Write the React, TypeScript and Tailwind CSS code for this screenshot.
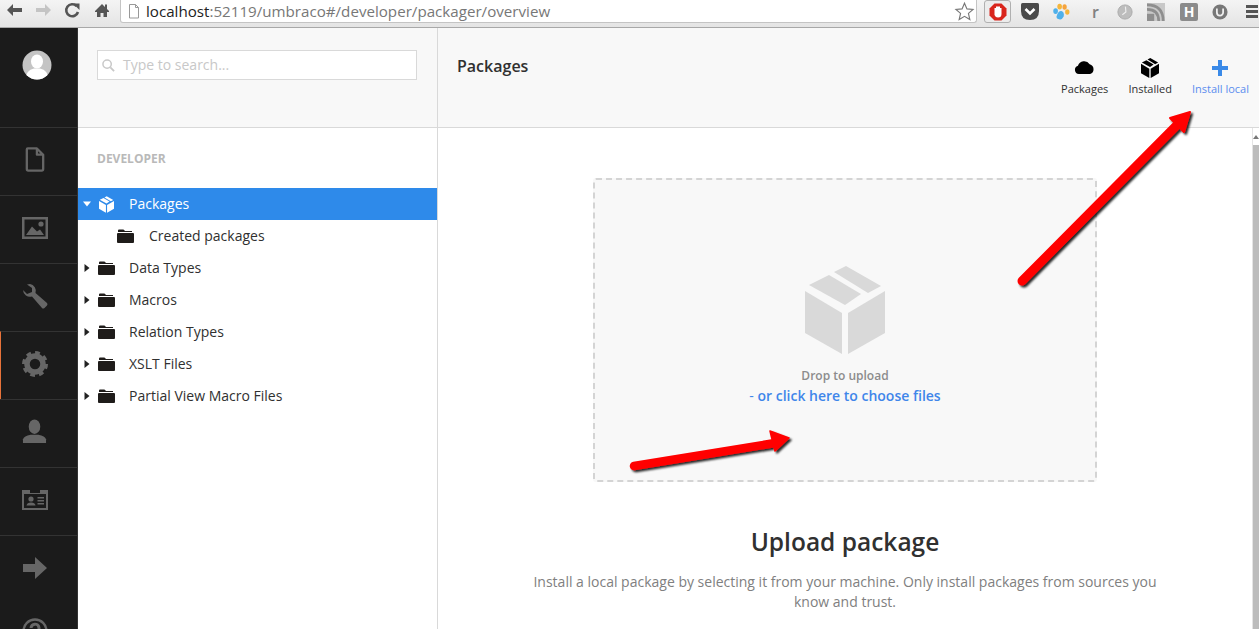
const font = "font-['Open_Sans',sans-serif]";

function BoxIcon({ className }: { className?: string }) {
    return (
        <svg viewBox="0 0 80 88" className={className} fill="currentColor">
            <path d="M0 25 L37 47 V88 L0 67 Z" />
            <path d="M80 25 L43 47 V88 L80 67 Z" />
            <path d="M4 19 L24 9 L56 28 L40 39 Z" />
            <path d="M29 6 L41 0 L76 20 L63 27 Z" />
        </svg>
    );
}

function FolderIcon() {
    return (
        <svg viewBox="0 0 17 14" className="h-[14px] w-[17px] shrink-0" fill="#1f1c1a">
            <path d="M1 3 V1.5 Q1 .5 2 .5 H6 Q7 .5 7.5 1.5 L8 2 H15 V3 Z" />
            <rect x="0" y="4" width="17" height="10" rx="1" />
        </svg>
    );
}

function Caret({ open, white }: { open?: boolean; white?: boolean }) {
    const fill = white ? "#fff" : "#222";
    return (
        <svg viewBox="0 0 8 8" className="h-2 w-2 shrink-0" fill={fill}>
            {open ? <path d="M0 1.5 H8 L4 6.5 Z" /> : <path d="M1.5 0 L6.5 4 L1.5 8 Z" />}
        </svg>
    );
}

function TreeRow({ label, icon, open, active, child }: { label: string; icon?: React.ReactNode; open?: boolean; active?: boolean; child?: boolean }) {
    return (
        <div className={`flex h-8 items-center text-sm ${active ? "bg-[#2e8aea] text-white" : "text-[#303030]"} ${child ? "pl-[39px]" : "pl-[5px]"}`}>
            {!child && <Caret open={open} white={active} />}
            <div className={`${child ? "" : "ml-[7px]"} flex w-[17px] justify-center`}>{icon ?? <FolderIcon />}</div>
            <span className={child ? "ml-[15px]" : "ml-[14px]"}>{label}</span>
        </div>
    );
}

function NavItem({ children, active }: { children: React.ReactNode; active?: boolean }) {
    return (
        <div className={`flex h-[68px] shrink-0 items-center justify-center border-t border-[#333] pb-[4px] pr-[8px] text-[#666] ${active ? "border-l border-l-[#e8733a]" : ""}`}>
            {children}
        </div>
    );
}

function TopAction({ label, children, blue }: { label: string; children: React.ReactNode; blue?: boolean }) {
    return (
        <div className={`flex flex-col items-center text-[11px] leading-[14px] ${blue ? "text-[#5b8def]" : "text-[#303030]"}`}>
            <div className="flex h-[22px] items-center justify-center">{children}</div>
            <span className="mt-[3px]">{label}</span>
        </div>
    );
}

function BrowserBar() {
    return (
        <div className="flex h-[28px] shrink-0 items-start border-b border-[#a8a8a8] bg-gradient-to-b from-[#f4f4f4] to-[#e4e4e4]">
            <svg viewBox="0 0 120 27" className="h-[27px] w-[120px] shrink-0">
                <path d="M7 10 L13 4 V8 H22 V12 H13 V16 Z" fill="#555" />
                <path d="M51 10 L45 4 V8 H36 V12 H45 V16 Z" fill="#c4c4c4" />
                <path d="M76.5 6 A6 6 0 1 0 78 12" fill="none" stroke="#555" strokeWidth="2.6" />
                <path d="M73 3.5 L79.5 3.5 L79.5 10 Z" fill="#555" />
                <path d="M95 11 L102 4 L105 7 V4.5 H107 V9 L109 11 V12 H107 V17 H103.5 V13 H100.5 V17 H97 V12 H95 Z" fill="#555" />
            </svg>
            <div className="flex h-[23px] w-[857px] shrink-0 items-center rounded-bl-[3px] rounded-br-[3px] border-b border-l border-r border-[#c4c4c4] bg-white pl-[7px]">
                <svg viewBox="0 0 12 15" className="h-[15px] w-3 shrink-0" fill="none" stroke="#999">
                    <path d="M1.5 .5 H7.5 L10.5 3.5 V14 H1.5 Z M7.5 .5 V3.5 H10.5" />
                </svg>
                <div className="ml-[6px] text-[15.15px] leading-[20px] text-[#777]">
                    <span className="text-[#222]">localhost</span>:52119/umbraco#/developer/packager/overview
                </div>
                <svg viewBox="0 0 24 24" className="ml-auto mr-[1px] h-[21px] w-[21px]" fill="#fff" stroke="#777" strokeWidth="1.3">
                    <path d="M12 2.5 L14.8 9 L21.8 9.6 L16.5 14.2 L18.1 21.2 L12 17.5 L5.9 21.2 L7.5 14.2 L2.2 9.6 L9.2 9 Z" />
                </svg>
            </div>
            <div className="flex h-[23px] flex-1 items-center pl-[7px]">
                <div className="flex h-[23px] w-[27px] shrink-0 items-center justify-center rounded-[3px] border border-[#b0b0b0] bg-[#ececec]">
                    <svg viewBox="0 0 18 18" className="h-[18px] w-[18px]">
                        <path d="M5.5 .5 H12.5 L17.5 5.5 V12.5 L12.5 17.5 H5.5 L.5 12.5 V5.5 Z" fill="#d9251c" />
                        <path d="M5.5 9 V5 H7 V3.5 H11 V5 H12.5 V11 Q12.5 14.5 9 14.5 Q6.5 14.5 5.5 12 Z" fill="#fff" />
                    </svg>
                </div>
                <svg viewBox="0 0 20 18" className="ml-[9px] h-[18px] w-5 shrink-0">
                    <path d="M1 1.5 Q1 0 2.5 0 H17.5 Q19 0 19 1.5 V8 Q19 17 10 17 Q1 17 1 8 Z" fill="#4a4a4a" />
                    <path d="M5.5 6 L10 10.5 L14.5 6" fill="none" stroke="#fff" strokeWidth="2.6" />
                </svg>
                <svg viewBox="0 0 20 20" className="ml-[12px] h-[18px] w-[18px] shrink-0">
                    <ellipse cx="4" cy="9" rx="2.6" ry="3.3" fill="#4fb0ea" />
                    <ellipse cx="8.5" cy="4" rx="2.6" ry="3.3" fill="#f5b63c" />
                    <ellipse cx="14" cy="4.5" rx="2.4" ry="3" fill="#f5a33c" />
                    <ellipse cx="17" cy="10" rx="2.4" ry="3" fill="#f5b63c" />
                    <path d="M5 15 Q7 8.5 10.5 9 Q14 10 13 15 Q11 19 8 18 Q5 18 5 15 Z" fill="#4fb0ea" />
                </svg>
                <span className="ml-[22px] w-[6px] text-[16px] font-semibold leading-[20px] text-[#808080]">r</span>
                <svg viewBox="0 0 18 18" className="ml-[19px] h-4 w-4 shrink-0">
                    <circle cx="9" cy="9" r="8" fill="#bdbdbd" stroke="#a8a8a8" />
                    <path d="M9.5 3 L10 9 L6 12" fill="none" stroke="#eee" strokeWidth="1.3" />
                </svg>
                <svg viewBox="0 0 20 20" className="ml-[14px] h-[18px] w-[18px] shrink-0">
                    <rect width="20" height="20" fill="#c8c8c8" />
                    <rect x="0" y="12" width="8" height="8" fill="#8e8e8e" />
                    <path d="M0 7 Q13 7 13 20 M0 2 Q18 2 18 20" fill="none" stroke="#8e8e8e" strokeWidth="3" />
                </svg>
                <div className="ml-[15px] flex h-[18px] w-[18px] shrink-0 items-center justify-center rounded-[2px] bg-[#8b8b8b] text-[14px] leading-none font-bold text-white">H</div>
                <svg viewBox="0 0 18 18" className="ml-[14px] h-4 w-4 shrink-0">
                    <circle cx="9" cy="9" r="8.5" fill="#777" />
                    <path d="M5.5 5 V9.5 A3.5 3.5 0 0 0 12.5 9.5 V5" fill="none" stroke="#eee" strokeWidth="2" />
                </svg>
                <div className="ml-[18px] flex flex-col gap-[2px]">
                    <div className="h-[3px] w-[12px] bg-[#555]" />
                    <div className="h-[3px] w-[12px] bg-[#555]" />
                    <div className="h-[3px] w-[12px] bg-[#555]" />
                </div>
            </div>
        </div>
    );
}

function Sidebar() {
    return (
        <div className="flex w-[78px] shrink-0 flex-col overflow-hidden border-r border-[#333] bg-[#1b1b1b]">
            <div className="flex h-[99px] shrink-0 justify-center pr-[4px] pt-[22px]">
                <svg viewBox="0 0 30 30" className="h-[30px] w-[30px]">
                    <clipPath id="avatar"><circle cx="15" cy="15" r="14.5" /></clipPath>
                    <circle cx="15" cy="15" r="14.5" fill="#c4c4c4" />
                    <g clipPath="url(#avatar)" fill="#fff">
                        <ellipse cx="15" cy="11.5" rx="6" ry="7" />
                        <path d="M3 30 Q4 20 12 18.5 H18 Q26 20 27 30 Z" />
                    </g>
                </svg>
            </div>
            <NavItem>
                <svg viewBox="0 0 20 26" className="h-[25px] w-5" fill="none" stroke="currentColor" strokeWidth="2.4">
                    <path d="M2.5 1.5 H12 L18.5 8 V23 Q18.5 24.5 17 24.5 H3 Q1.5 24.5 1.5 23 V2.5 Q1.5 1.5 2.5 1.5 Z M12 1.5 V8 H18.5" strokeLinejoin="round" />
                </svg>
            </NavItem>
            <NavItem>
                <svg viewBox="0 0 26 22" className="h-[22px] w-[26px]" fill="currentColor">
                    <path fillRule="evenodd" d="M0 0 H26 V22 H0 Z M2.5 2.5 V19.5 H23.5 V2.5 Z" />
                    <circle cx="19" cy="7" r="2.6" />
                    <path d="M4 18 L10 9.5 L15 14.5 L18 12.5 L22 18 Z" />
                </svg>
            </NavItem>
            <NavItem>
                <svg viewBox="0 0 26 26" className="h-[26px] w-[26px]" fill="currentColor">
                    <path d="M8 1 A7 7 0 0 1 13.5 10 L25 20 Q26 21 25 22.5 L22.5 25 Q21 26 20 25 L10 13.5 A7 7 0 0 1 1 7 L5 11 L10 9 L10 5 L5 1.5 Q6.5 1 8 1 Z" />
                </svg>
            </NavItem>
            <NavItem active>
                <svg viewBox="0 0 26 26" className="h-[26px] w-[26px]">
                    <circle cx="13" cy="13" r="8" fill="none" stroke="currentColor" strokeWidth="5.5" />
                    <circle cx="13" cy="13" r="11" fill="none" stroke="currentColor" strokeWidth="4" strokeDasharray="4.6 4" />
                </svg>
            </NavItem>
            <NavItem>
                <svg viewBox="0 0 26 26" className="h-[25px] w-[25px]" fill="currentColor">
                    <ellipse cx="13" cy="8" rx="6" ry="7.5" />
                    <path d="M1 25 V21 Q2 18 9 16.5 H17 Q24 18 25 21 V25 Z" />
                </svg>
            </NavItem>
            <NavItem>
                <svg viewBox="0 0 26 20" className="h-5 w-[26px]" fill="currentColor">
                    <path fillRule="evenodd" d="M0 0 H26 V20 H0 Z M2 4 V18 H24 V4 Z" />
                    <path d="M8 0 H18 V3 H8 Z" fill="#1b1b1b" />
                    <circle cx="9" cy="9" r="2.6" />
                    <path d="M4.5 15.5 Q5 12.5 9 12.5 Q13 12.5 13.5 15.5 Z" />
                    <path d="M15.5 7 H22 V8.5 H15.5 Z M15.5 10 H22 V11.5 H15.5 Z M15.5 13 H22 V14.5 H15.5 Z" />
                </svg>
            </NavItem>
            <NavItem>
                <svg viewBox="0 0 24 22" className="h-[22px] w-6" fill="currentColor">
                    <path d="M0 7 H12 V0 L24 11 L12 22 V15 H0 Z" />
                </svg>
            </NavItem>
            <div className="flex h-[68px] shrink-0 justify-center pr-[8px] pt-[15px] text-[#666]">
                <svg viewBox="0 0 26 26" className="h-[26px] w-[26px]" fill="none" stroke="currentColor" strokeWidth="2.4">
                    <circle cx="13" cy="13" r="11.5" />
                    <path d="M9 10 A4 4 0 1 1 14 14 V16" strokeWidth="3" />
                </svg>
            </div>
        </div>
    );
}

function Arrows() {
    return (
        <svg className="pointer-events-none absolute inset-0 h-full w-full" viewBox="0 0 1259 629">
            <defs>
                <filter id="shadow" x="-20%" y="-20%" width="140%" height="140%">
                    <feDropShadow dx="2" dy="2" stdDeviation="1" floodColor="#000" floodOpacity="0.85" />
                </filter>
            </defs>
            <g filter="url(#shadow)">
                <path d="M1022 281 L1178 124" stroke="#f00" strokeWidth="9" strokeLinecap="round" fill="none" />
                <path d="M1170 118 L1190 112 L1184 132 Z" fill="#f00" stroke="#f00" strokeWidth="2" strokeLinejoin="round" />
                <path d="M634 466 L775 443" stroke="#f00" strokeWidth="8.5" strokeLinecap="round" fill="none" />
                <path d="M770 431 L789 438 L775 451 Z" fill="#f00" stroke="#f00" strokeWidth="1.5" strokeLinejoin="round" />
            </g>
        </svg>
    );
}

export default function App() {
    return (
        <div className={`relative flex h-[629px] w-[1259px] flex-col overflow-hidden bg-white ${font}`}>
            <BrowserBar />
            <div className="flex min-h-0 flex-1">
                <Sidebar />
                <div className="flex w-[360px] shrink-0 flex-col border-r border-[#d9d9d9]">
                    <div className="h-[100px] shrink-0 border-b border-[#d9d9d9] bg-[#f8f8f8] pl-[19px] pt-[22px]">
                        <div className="flex h-[30px] w-[320px] items-center border border-[#d9d9d9] bg-white pl-[4px] text-sm text-[#c8c8c8]">
                            <svg viewBox="0 0 14 14" className="h-[13px] w-[13px]" fill="none" stroke="#c8c8c8" strokeWidth="1.6">
                                <circle cx="5.5" cy="5.5" r="4.5" />
                                <path d="M9 9 L13 13" strokeWidth="2" />
                            </svg>
                            <span className="ml-[8px]">Type to search...</span>
                        </div>
                    </div>
                    <div className="pl-[19px] pt-[22px] text-xs leading-[18px] font-bold text-[#b9b9b9]">DEVELOPER</div>
                    <div className="mt-[20px]">
                        <TreeRow label="Packages" open active icon={<BoxIcon className="h-[17px] w-[15px] text-white" />} />
                        <TreeRow label="Created packages" child />
                        <TreeRow label="Data Types" />
                        <TreeRow label="Macros" />
                        <TreeRow label="Relation Types" />
                        <TreeRow label="XSLT Files" />
                        <TreeRow label="Partial View Macro Files" />
                    </div>
                </div>
                <div className="flex min-w-0 flex-1 flex-col">
                    <div className="flex h-[100px] shrink-0 justify-between border-b border-[#d9d9d9] bg-[#f8f8f8] pl-[19px] pr-[10px]">
                        <div className="pt-[27px] text-base leading-[22px] font-semibold text-[#303030]">Packages</div>
                        <div className="flex gap-[20px] pt-[29px]">
                            <TopAction label="Packages">
                                <svg viewBox="0 0 22 16" className="-mt-[4px] h-[15px] w-[21px]" fill="#000">
                                    <path d="M5 16 A4.5 4.5 0 0 1 4 7.2 A7 7 0 0 1 16.5 5.5 A5.5 5.5 0 0 1 17 16 Z" />
                                </svg>
                            </TopAction>
                            <TopAction label="Installed">
                                <BoxIcon className="h-[20px] w-[18px] text-black" />
                            </TopAction>
                            <TopAction label="Install local" blue>
                                <svg viewBox="0 0 16 16" className="h-4 w-4" fill="#3a8ae8">
                                    <path d="M6 0 H10 V6 H16 V10 H10 V16 H6 V10 H0 V6 H6 Z" />
                                </svg>
                            </TopAction>
                        </div>
                    </div>
                    <div className="flex min-h-0 flex-1">
                        <div className="flex min-w-0 flex-1 flex-col items-center pt-[50px]">
                            <div className="flex h-[304px] w-[504px] shrink-0 flex-col items-center rounded-[3px] border-2 border-dashed border-[#d4d4d4] bg-[#f8f8f8] pt-[86px]">
                                <BoxIcon className="h-[88px] w-[80px] text-[#d9d9d9]" />
                                <div className="mt-[13px] text-xs leading-[18px] font-semibold text-[#8c8c8c]">Drop to upload</div>
                                <div className="mt-[1px] text-sm leading-[20px] font-semibold text-[#3f86ea]">
                                    <span className="font-normal">- </span>or click here to choose files
                                </div>
                            </div>
                            <h1 className="mt-[42px] text-[24.5px] leading-[36px] font-semibold text-[#303030]">Upload package</h1>
                            <p className="mt-[12px] w-[640px] text-center text-sm leading-[20px] text-[#808080]">
                                Install a local package by selecting it from your machine. Only install packages from sources you know and trust.
                            </p>
                        </div>
                        <div className="flex w-[7px] shrink-0 flex-col border-l border-[#e4e4e4]">
                            <div className="flex h-[17px] items-center justify-center">
                                <svg viewBox="0 0 6 4" className="h-1 w-[6px]" fill="#777"><path d="M3 0 L6 4 H0 Z" /></svg>
                            </div>
                            <div className="flex-1 bg-[#bcbcbc]" />
                        </div>
                    </div>
                </div>
            </div>
            <Arrows />
        </div>
    );
}
